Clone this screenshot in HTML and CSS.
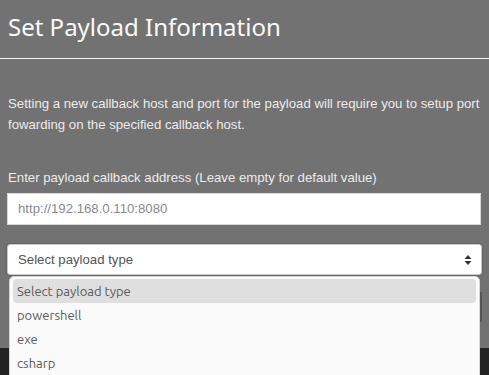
FILE: index.html
```html
<!DOCTYPE html>
<html>
<head>
<meta charset="utf-8">
<link rel="stylesheet" href="styles.css">
</head>
<body>
<div class="modal">
  <h1 class="title">Set Payload Information</h1>
  <hr class="rule">
  <div class="body">
    <p class="info">Setting a new callback host and port for the payload will require you to setup port fowarding on the specified callback host.</p>
    <label class="label">Enter payload callback address (Leave empty for default value)</label>
    <div class="input">http://192.168.0.110:8080</div>
    <div class="select-wrap">
      <div class="select">
        <span>Select payload type</span>
        <svg class="arrows" width="8" height="12" viewBox="0 0 8 12"><path d="M4 1 L7.5 5 H0.5 Z M4 11 L7.5 7 H0.5 Z" fill="#333"/></svg>
      </div>
      <div class="menu">
        <div class="opt sel">Select payload type</div>
        <div class="opt">powershell</div>
        <div class="opt">exe</div>
        <div class="opt">csharp</div>
      </div>
    </div>
    <div class="btn-edge"></div>
  </div>
  <div class="footer"></div>
</div>
</body>
</html>
```
FILE: styles.css
```css
html, body { margin: 0; padding: 0; }
body {
  width: 489px; height: 375px; overflow: hidden;
  background: #727272;
  font-family: "Liberation Sans", Arial, sans-serif;
}
.modal { position: relative; height: 375px; }
.title {
  margin: 0;
  padding: 13px 0 0 8px;
  box-sizing: border-box;
  height: 58px;
  font-family: "Noto Sans", "Open Sans", sans-serif;
  font-weight: 400;
  font-size: 24px;
  line-height: 28px;
  color: #fafafa;
}
.rule { margin: 0; border: 0; border-top: 1px solid #f4f4f4; height: 0; }
.body { padding: 34px 7px 0 7px; position: relative; }
.info {
  margin: 0 0 0 1px;
  font-size: 13.2px;
  line-height: 21px;
  color: #ececec;
}
.label {
  display: block;
  margin: 35px 0 0 1px;
  font-size: 13.2px;
  line-height: 16px;
  color: #ececec;
}
.input {
  margin-top: 7px;
  height: 32px;
  width: 474px;
  box-sizing: border-box;
  background: #fff;
  border: 1px solid #d8d8d8;
  font-size: 13.2px;
  line-height: 30px;
  color: #8a8a8a;
  padding-left: 10px;
}
.select-wrap { position: relative; margin-top: 19px; }
.select {
  height: 31px;
  width: 475px;
  box-sizing: border-box;
  padding: 0 9px 0 10px;
  background: #fff;
  border: 1px solid #c9c9c9;
  border-radius: 3px;
  box-shadow: 0 0 2px rgba(0,0,0,0.35);
  display: flex; align-items: center; justify-content: space-between;
  font-size: 13.2px;
  color: #555;
}
.arrows { display: block; }
.menu {
  position: absolute;
  left: 2px; top: 32px;
  width: 471px;
  height: 110px;
  background: #fafafa;
  border: 1px solid #d6d6d6;
  border-radius: 5px;
  box-sizing: border-box;
  padding: 2px 3px;
  font-family: "Ubuntu", "Noto Sans", "Open Sans", sans-serif;
  font-size: 13px;
  color: #5a5a5a;
  z-index: 2;
}
.opt { height: 24px; line-height: 24px; padding-left: 4px; }
.opt.sel { background: #dfdfdf; border-radius: 4px; }
.btn-edge {
  position: absolute; left: 480px; top: 233px;
  width: 2px; height: 30px; background: #555;
}
.footer {
  position: absolute; left: 0; right: 0; bottom: 0; height: 27px;
  background: #222;
}
```
